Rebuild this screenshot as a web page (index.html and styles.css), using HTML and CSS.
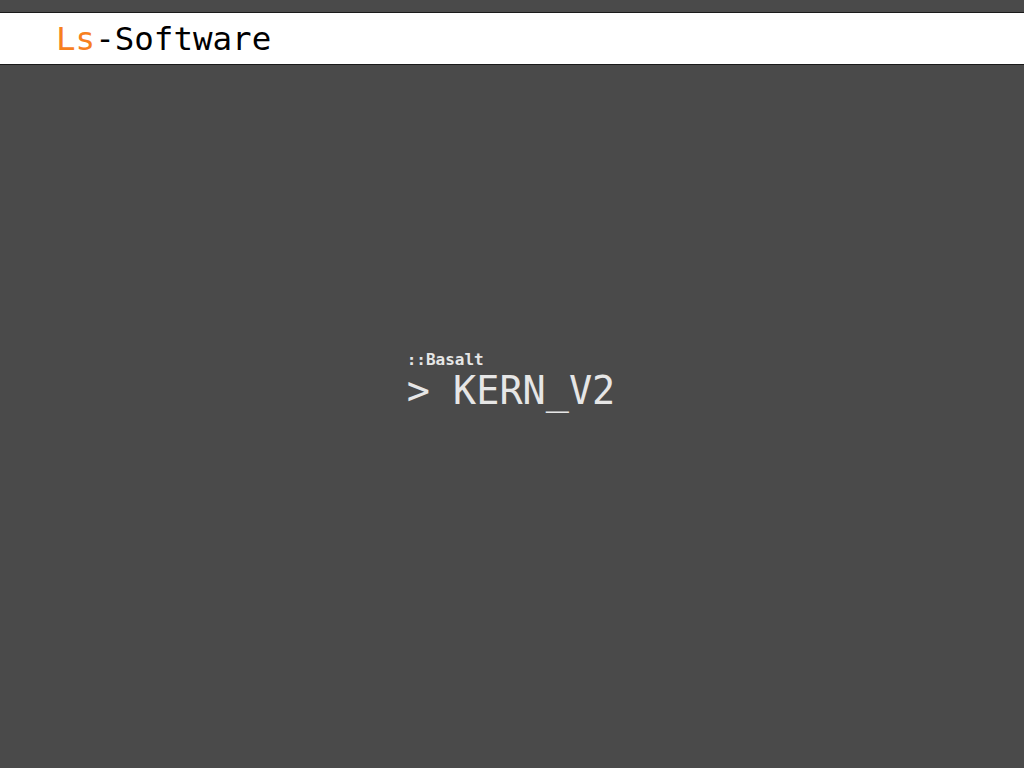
FILE: index.html
```html
<!DOCTYPE html>
<html>
<head>
<meta charset="utf-8">
<link rel="stylesheet" href="styles.css">
</head>
<body>
<header class="topbar">
  <div class="brand"><span class="brand-ls">Ls</span>-Software</div>
</header>
<main class="stage">
  <div class="title-block">
    <div class="subtitle">::Basalt</div>
    <div class="title">&gt; KERN_V2</div>
  </div>
</main>
</body>
</html>
```
FILE: styles.css
```css
html, body {
  margin: 0;
  padding: 0;
  background: #4a4a4a;
  height: 100%;
}
body {
  font-family: "DejaVu Sans Mono", "Liberation Mono", monospace;
}
.topbar {
  margin-top: 12px;
  background: #ffffff;
  border-top: 1px solid #1a1a1a;
  border-bottom: 1px solid #1a1a1a;
  height: 51px;
  display: flex;
  align-items: center;
  padding-left: 56px;
}
.brand {
  font-size: 32.5px;
  color: #000;
  line-height: 1;
  margin-top: 1px;
}
.brand-ls {
  color: #f7801e;
}
.stage {
  display: flex;
  justify-content: center;
  padding-top: 286px;
}
.title-block {
  color: #e6e6e6;
  margin-left: -2px;
}
.subtitle {
  font-size: 16px;
  font-weight: bold;
  line-height: 18px;
}
.title {
  font-size: 38.5px;
  line-height: 44px;
}
```
